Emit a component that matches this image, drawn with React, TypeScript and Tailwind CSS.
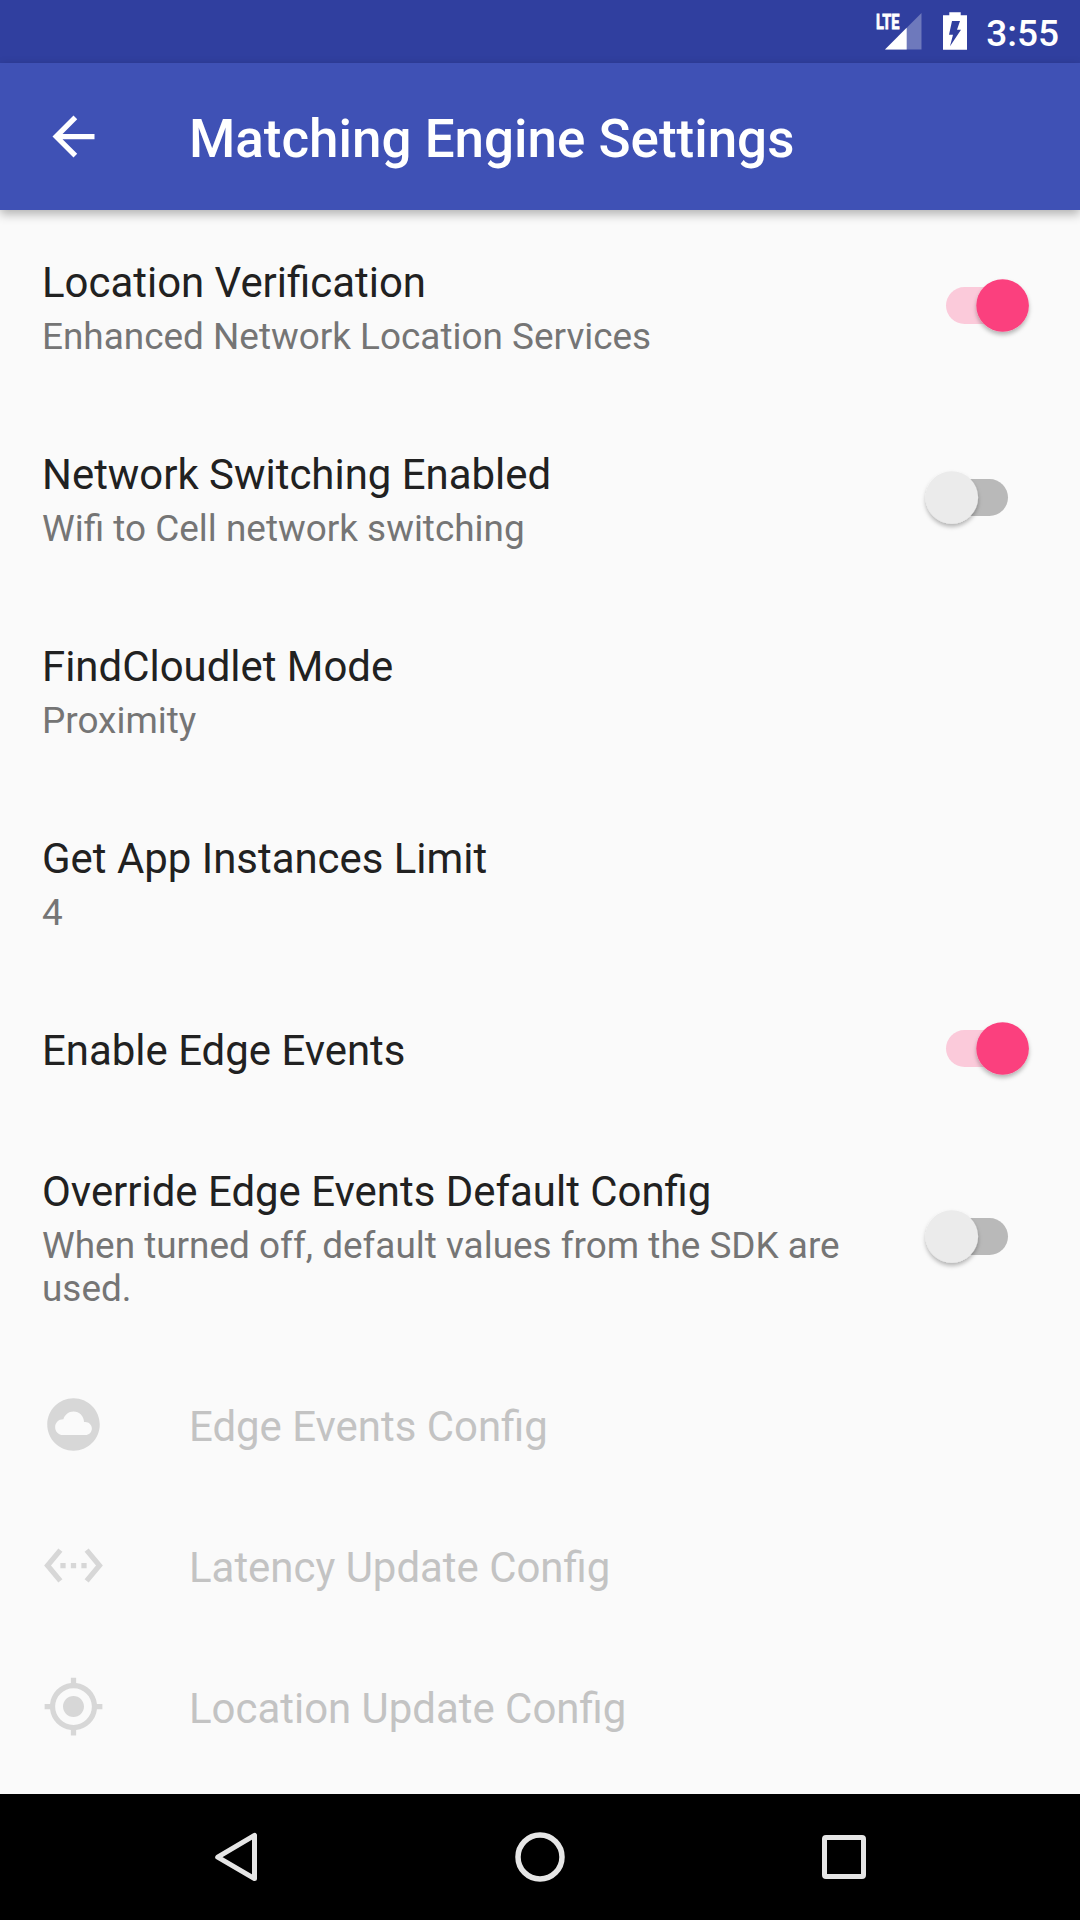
import React from 'react';

function Switch({ on }: { on: boolean }) {
  return (
    <svg width="156" height="84" viewBox="0 0 156 84" className="mr-6 block shrink-0">
      <defs>
        <filter id="thumb" x="-30%" y="-30%" width="160%" height="160%">
          <feDropShadow dx="0" dy="3" stdDeviation="2" floodColor="#000" floodOpacity="0.28" />
        </filter>
      </defs>
      <rect x="46" y="23" width="62" height="37" rx="18.5" fill={on ? '#fbcada' : '#b9b9b9'} />
      <circle cx={on ? 102.6 : 51.8} cy="41.5" r="26.3" fill={on ? '#fb407e' : '#ebebeb'} filter="url(#thumb)" />
    </svg>
  );
}

function Row({ title, sub, toggle, height }: { title: string; sub?: string; toggle?: boolean; height: string }) {
  return (
    <div className={`flex items-center ${height}`}>
      <div className="flex-1 pt-1 pl-[42px]">
        <div className="text-[41.93px] leading-[49px] text-[#212121]">{title}</div>
        {sub && <div className="w-[820px] pt-2 text-[36.92px] leading-[43px] text-[#757575]">{sub}</div>}
      </div>
      {toggle !== undefined && <Switch on={toggle} />}
    </div>
  );
}

function IconRow({ title, path }: { title: string; path: string }) {
  return (
    <div className="flex h-[141px] items-center pl-[42px]">
      <svg width="63" height="63" viewBox="0 0 24 24" fill="#d7d7d7">
        <path d={path} />
      </svg>
      <div className="pt-1 pl-[84px] text-[41.93px] leading-[49px] text-[#c3c3c3]">{title}</div>
    </div>
  );
}

const cloudPath =
  'M12 2C6.48 2 2 6.48 2 12s4.48 10 10 10 10-4.48 10-10S17.52 2 12 2zm4.5 14H8c-1.66 0-3-1.34-3-3s1.34-3 3-3l.14.01C8.58 8.28 10.14 7 12 7c2.21 0 4 1.79 4 4h.5c1.38 0 2.5 1.12 2.5 2.5S17.88 16 16.5 16z';
const ethernetPath =
  'M7.77 6.76L6.23 5.48.82 12l5.41 6.52 1.54-1.28L3.42 12l4.35-5.24zM7 13h2v-2H7v2zm10-2h-2v2h2v-2zm-6 2h2v-2h-2v2zm6.77-7.52l-1.54 1.28L20.58 12l-4.35 5.24 1.54 1.28L23.18 12l-5.41-6.52z';
const locationPath =
  'M12 8c-2.21 0-4 1.79-4 4s1.79 4 4 4 4-1.79 4-4-1.79-4-4-4zm8.94 3c-.46-4.17-3.77-7.48-7.94-7.94V1h-2v2.06C6.83 3.52 3.52 6.83 3.06 11H1v2h2.06c.46 4.17 3.77 7.48 7.94 7.94V23h2v-2.06c4.17-.46 7.48-3.77 7.94-7.94H23v-2h-2.06zM12 19c-3.87 0-7-3.13-7-7s3.13-7 7-7 7 3.13 7 7-3.13 7-7 7z';

function StatusBar() {
  return (
    <div className="flex h-[63px] items-center justify-end bg-[#303f9f] pr-[21px] text-white">
      <svg width="50" height="63" viewBox="872 0 50 63" className="mr-[21px]">
        <path d="M885 49.5 921.5 13v36.5z" fill="#fff" fillOpacity="0.3" />
        <path d="M885 49.5 906.7 27.8v21.7z" fill="#fff" />
        <text x="876" y="28.8" fontSize="21" fontWeight="700" fill="#fff" stroke="#fff" strokeWidth="0.8" textLength="23.5" lengthAdjust="spacingAndGlyphs">LTE</text>
      </svg>
      <svg width="24" height="63" viewBox="943 0 24 63" className="mr-[19px]">
        <path fillRule="evenodd" d="M949.3 12.3h11.4v3H967v34.5h-24V15.3h6.3zM952 21l-3 13.800h4L950 46.300 961 29.700h-4L960 21z" fill="#fff" />
      </svg>
      <div className="pt-[3px] text-[37px] leading-[43px] font-medium">3:55</div>
    </div>
  );
}

export default function App() {
  return (
    <div className="flex h-[1920px] w-[1080px] flex-col overflow-hidden bg-[#fafafa] font-[Roboto,sans-serif]">
      <StatusBar />
      <div className="flex h-[147px] items-center bg-[#3f51b5] pl-[42px] text-white shadow-[0_4px_10px_rgba(0,0,0,0.3)]">
        <svg width="63" height="63" viewBox="0 0 24 24" fill="#fff">
          <path d="M20 11H7.83l5.59-5.59L12 4l-8 8 8 8 1.41-1.41L7.83 13H20v-2z" />
        </svg>
        <div className="pt-[5px] pl-[84px] text-[52.95px] leading-[62px] font-medium">Matching Engine Settings</div>
      </div>
      <div className="flex flex-1 flex-col">
        <Row height="h-48" title="Location Verification" sub="Enhanced Network Location Services" toggle={true} />
        <Row height="h-48" title="Network Switching Enabled" sub="Wifi to Cell network switching" toggle={false} />
        <Row height="h-48" title="FindCloudlet Mode" sub="Proximity" />
        <Row height="h-48" title="Get App Instances Limit" sub="4" />
        <Row height="h-[141px]" title="Enable Edge Events" toggle={true} />
        <Row height="h-[235px]" title="Override Edge Events Default Config" sub="When turned off, default values from the SDK are used." toggle={false} />
        <IconRow title="Edge Events Config" path={cloudPath} />
        <IconRow title="Latency Update Config" path={ethernetPath} />
        <IconRow title="Location Update Config" path={locationPath} />
      </div>
      <div className="flex h-[126px] items-center justify-center bg-black">
        <div className="flex w-[304px] justify-center">
          <svg width="50" height="50" viewBox="0 0 50 50" fill="none" stroke="#e6e6e6" strokeWidth="5" strokeLinejoin="round">
            <path d="M6.7 25.2 43.5 3.3v43.3z" />
          </svg>
        </div>
        <div className="flex w-[304px] justify-center">
          <svg width="50" height="50" viewBox="0 0 50 50" fill="none" stroke="#e6e6e6" strokeWidth="5.5">
            <circle cx="25" cy="25" r="22" />
          </svg>
        </div>
        <div className="flex w-[304px] justify-center">
          <svg width="50" height="50" viewBox="0 0 50 50" fill="none" stroke="#e6e6e6" strokeWidth="5">
            <rect x="5.5" y="5.5" width="39" height="39" rx="1.5" />
          </svg>
        </div>
      </div>
    </div>
  );
}
